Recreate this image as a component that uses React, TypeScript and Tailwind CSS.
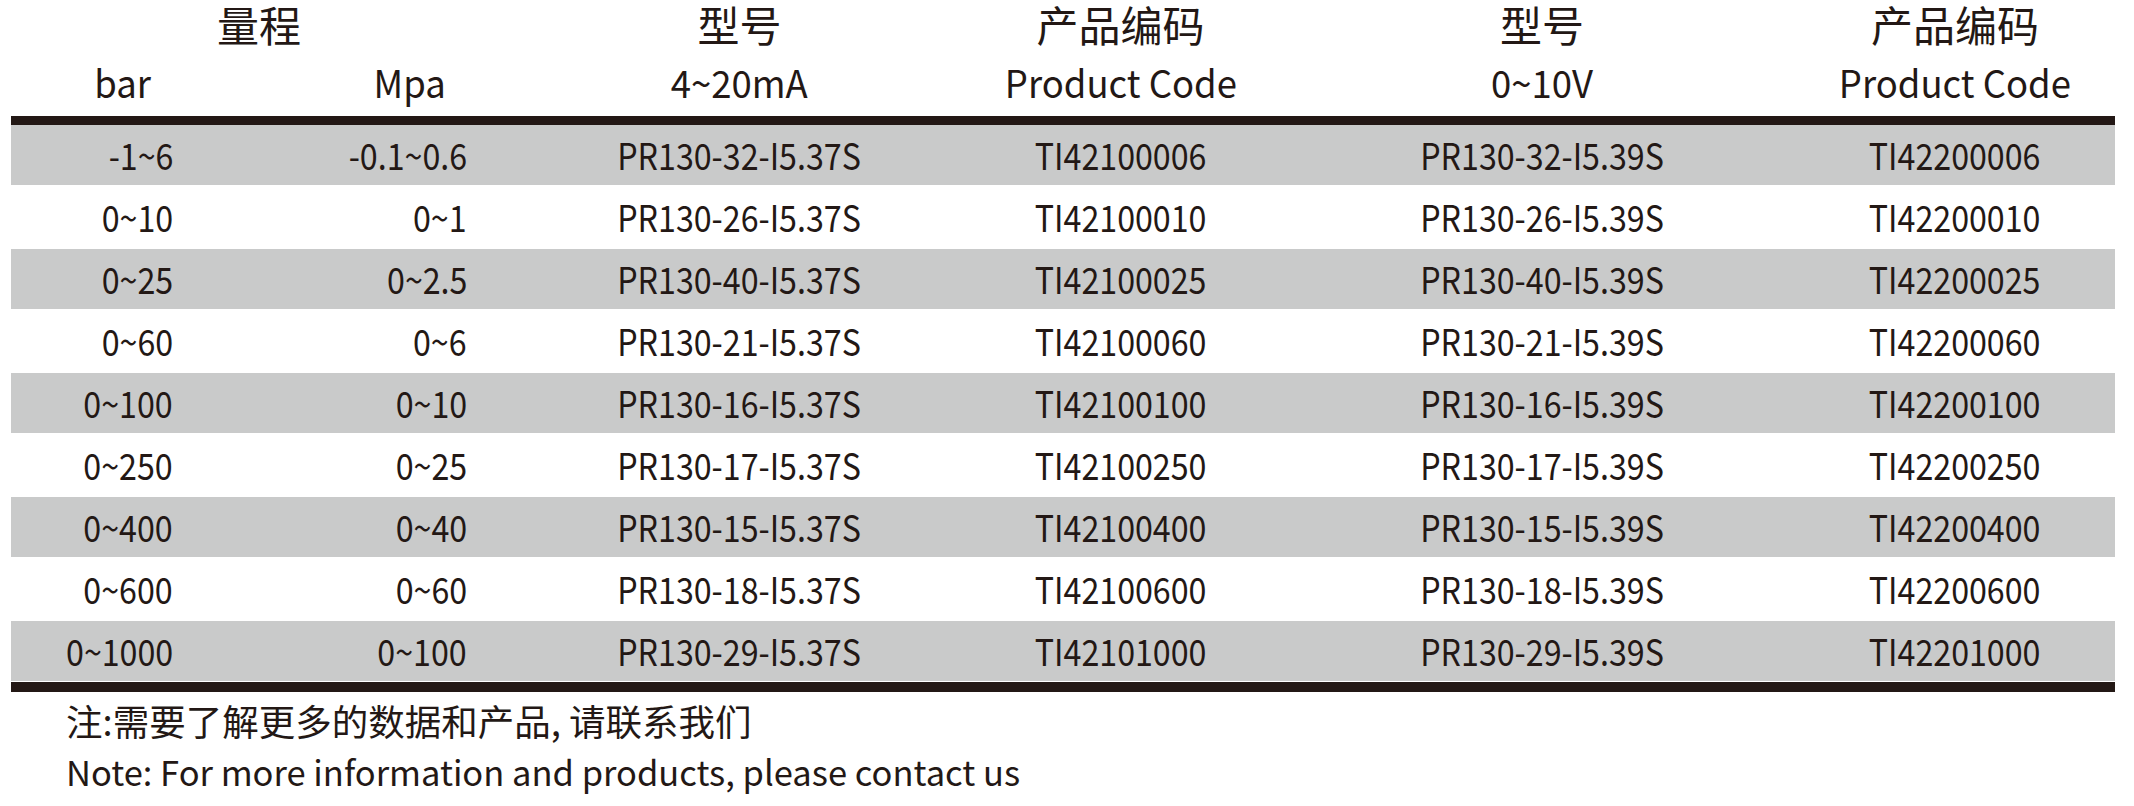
import React from "react";

const rows = [
  ["-1~6", "-0.1~0.6", "PR130-32-I5.37S", "TI42100006", "PR130-32-I5.39S", "TI42200006"],
  ["0~10", "0~1", "PR130-26-I5.37S", "TI42100010", "PR130-26-I5.39S", "TI42200010"],
  ["0~25", "0~2.5", "PR130-40-I5.37S", "TI42100025", "PR130-40-I5.39S", "TI42200025"],
  ["0~60", "0~6", "PR130-21-I5.37S", "TI42100060", "PR130-21-I5.39S", "TI42200060"],
  ["0~100", "0~10", "PR130-16-I5.37S", "TI42100100", "PR130-16-I5.39S", "TI42200100"],
  ["0~250", "0~25", "PR130-17-I5.37S", "TI42100250", "PR130-17-I5.39S", "TI42200250"],
  ["0~400", "0~40", "PR130-15-I5.37S", "TI42100400", "PR130-15-I5.39S", "TI42200400"],
  ["0~600", "0~60", "PR130-18-I5.37S", "TI42100600", "PR130-18-I5.39S", "TI42200600"],
  ["0~1000", "0~100", "PR130-29-I5.37S", "TI42101000", "PR130-29-I5.39S", "TI42201000"],
];

const font = { fontFamily: '"Noto Sans CJK SC", "Noto Sans", sans-serif' };

function C({ children }: { children: React.ReactNode }) {
  return <span className="inline-block scale-x-[0.87] origin-center whitespace-nowrap">{children}</span>;
}
function R({ children }: { children: React.ReactNode }) {
  return <span className="inline-block scale-x-[0.87] origin-right whitespace-nowrap">{children}</span>;
}
function H({ children }: { children: React.ReactNode }) {
  return <span className="inline-block scale-x-[0.96] origin-center whitespace-nowrap">{children}</span>;
}

export default function App() {
  return (
    <div
      className="w-[2134px] h-[806px] bg-white text-[#231815] overflow-hidden"
      style={font}
    >
      <div className="ml-[11px] w-[2104px]">
        {/* header line 1 */}
        <div className="flex h-[46px] pt-[2px] items-center text-[42px] leading-[44px]">
          <div className="w-[574px] text-center pr-[78px]">量程</div>
          <div className="w-[309px] text-center">型号</div>
          <div className="w-[453px] text-center">产品编码</div>
          <div className="w-[390px] text-center">型号</div>
          <div className="w-[378px] text-center pl-[58px]">产品编码</div>
        </div>
        {/* header line 2 */}
        <div className="flex h-[70px] pt-[2px] items-center text-[38px] leading-[46px]">
          <div className="w-[224px] text-center"><H>bar</H></div>
          <div className="w-[350px] text-center"><H>Mpa</H></div>
          <div className="w-[309px] text-center"><H>4~20mA</H></div>
          <div className="w-[453px] text-center"><H>Product Code</H></div>
          <div className="w-[390px] text-center"><H>0~10V</H></div>
          <div className="w-[378px] text-center pl-[58px]"><H>Product Code</H></div>
        </div>
        <div className="h-[9px] bg-[#231815]" />
        {rows.map((r, i) => (
          <div
            key={i}
            className={`flex items-center pb-[1px] text-[37px] leading-none ${
              i % 2 === 0 ? "h-[60px] bg-[#c9caca]" : "h-[64px] bg-white"
            }`}
          >
            <div className="w-[224px] text-right pr-[62px]"><R>{r[0]}</R></div>
            <div className="w-[350px] text-right pr-[118px]"><R>{r[1]}</R></div>
            <div className="w-[309px] text-center"><C>{r[2]}</C></div>
            <div className="w-[453px] text-center"><C>{r[3]}</C></div>
            <div className="w-[390px] text-center"><C>{r[4]}</C></div>
            <div className="w-[378px] text-center pl-[58px]"><C>{r[5]}</C></div>
          </div>
        ))}
        <div className="h-[1px] bg-white" />
        <div className="h-[10px] bg-[#231815]" />
      </div>
      <div className="pl-[66px] pt-[3px] leading-[51px]">
        <div className="text-[36.5px]">注:需要了解更多的数据和产品, 请联系我们</div>
        <div className="text-[34.5px]">Note: For more information and products, please contact us</div>
      </div>
    </div>
  );
}
